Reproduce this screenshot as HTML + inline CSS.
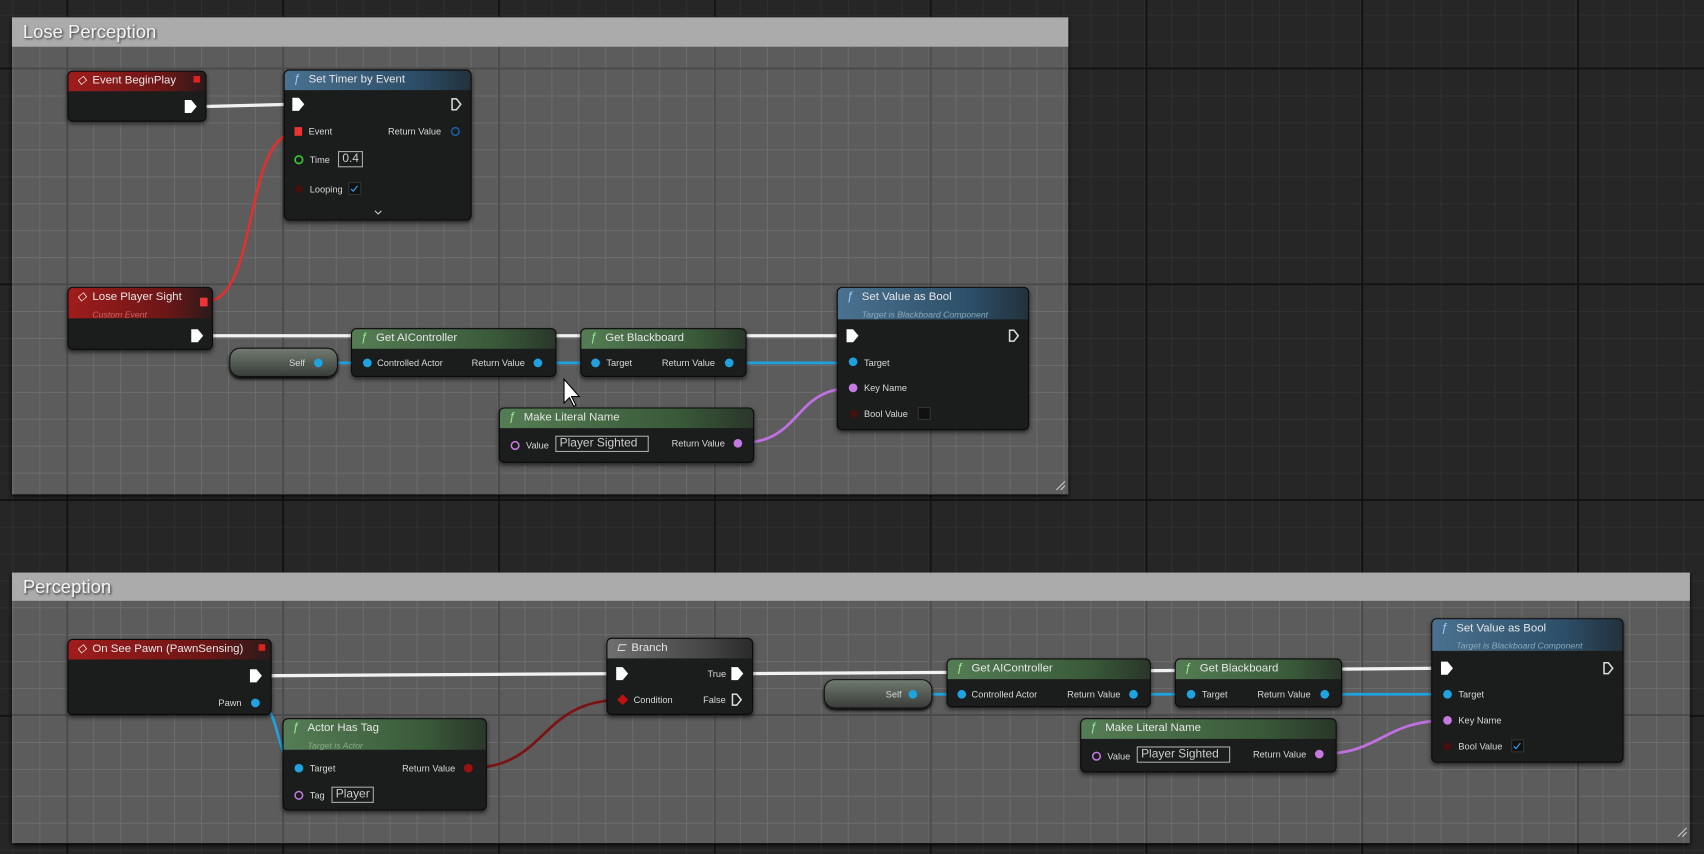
<!DOCTYPE html>
<html><head><meta charset="utf-8"><style>
*{margin:0;padding:0;box-sizing:border-box}
html,body{width:1704px;height:854px;overflow:hidden;background:#262626}
#w{position:absolute;left:0;top:0;width:1568px;height:786px;transform:scale(1.08673,1.08651);transform-origin:0 0;font-family:"Liberation Sans",sans-serif;
background-color:#262626;
background-image:linear-gradient(90deg,#131313 2px,transparent 2px),linear-gradient(0deg,#131313 2px,transparent 2px),linear-gradient(90deg,#303030 1px,transparent 1px),linear-gradient(0deg,#303030 1px,transparent 1px);
background-size:198.6px 198.6px,198.6px 198.6px,24.8px 24.8px,24.8px 24.8px;
background-position:61px 0,0 64px,61px 0,0 64px}
.c{position:absolute;background-color:#5c5c5c;
background-image:linear-gradient(90deg,#4b4b4b 2px,transparent 2px),linear-gradient(0deg,#4b4b4b 2px,transparent 2px),linear-gradient(90deg,#6c6c6c 1px,transparent 1px),linear-gradient(0deg,#6c6c6c 1px,transparent 1px);
background-size:198.6px 198.6px,198.6px 198.6px,24.8px 24.8px,24.8px 24.8px;box-shadow:0 2px 4px #000}
.ct{position:absolute;left:0;right:0;top:0;background:#ababab;color:#f4f4f4;font-size:17px;padding-left:10px;text-shadow:1px 1px 2px #333}
.n{position:absolute;background:#1b1c1c;border:1px solid #0a0a0a;border-radius:5px;box-shadow:0 2px 4px rgba(0,0,0,.6)}
.h{height:18px;border-radius:4px 4px 0 0;color:#e6e6e6;font-size:10.5px;line-height:17px;padding-left:22px;white-space:nowrap;position:relative}
.h i{position:absolute;left:8px;top:0;font-style:italic;color:#9cf;font-size:11px}
.r{background:linear-gradient(90deg,#a01c1c,#6a1616 70%,#2a1a1a)}
.b{background:linear-gradient(90deg,#4a7290,#2c4e68 70%,#23313c)}
.g{background:linear-gradient(90deg,#557d55,#395a39 70%,#2a362a)}
.gr{background:linear-gradient(90deg,#707070,#444 70%,#2a2a2a)}
.sub{font-size:8px;font-style:italic;color:#c66;position:absolute;left:22px;top:16px}
.t{position:absolute;font-size:8.5px;color:#d8d8d8;white-space:nowrap}
.box{position:absolute;border:1px solid #aaa;color:#ccc;font-size:11px;padding:0 3px;line-height:13px;height:15px;background:#1b1c1c}
.pill{position:absolute;border-radius:10px;background:linear-gradient(#6f7a6f,#3a3d3a);border:1px solid #111;box-shadow:0 2px 3px #000}
svg{position:absolute;left:0;top:0}
</style></head><body><div id="w">
<div class="c" style="left:11px;top:16px;width:972px;height:439px;background-position:50px 0,0 48px,50px 0,0 48px"><div class="ct" style="height:27px;line-height:27px">Lose Perception</div></div>
<div class="c" style="left:11px;top:527px;width:1544px;height:249px;background-position:50px 0,0 132px,50px 0,0 132px"><div class="ct" style="height:26px;line-height:27px">Perception</div></div>

<svg width="1568" height="786" fill="none">
<g stroke="#f2f2f2" stroke-width="3">
<path d="M188 98 L270 96"/><path d="M194 309 L780 309"/>
<path d="M236 622 C400 622 450 620 568 620"/><path d="M686 620 C900 620 1100 615 1328 615"/>
</g>
<g stroke="#1fa3e0" stroke-width="2.5">
<path d="M293 334 L340 334"/><path d="M495 334 L550 334"/><path d="M672 334 L786 334"/>
<path d="M840 639 L886 639"/><path d="M1043 639 L1098 639"/><path d="M1219 639 L1334 639"/>
<path d="M236 647 C260 647 252 707 276 707"/>
</g>
<path d="M188 278 C240 278 222 121 275 121" stroke="#e03030" stroke-width="2.5"/>
<path d="M431 707 C505 707 495 644 573 644" stroke="#7a1414" stroke-width="2.5"/>
<g stroke="#c070e0" stroke-width="2.5"><path d="M679 408 C740 408 728 357 786 357"/><path d="M1214 694 C1272 694 1272 663 1333 663"/></g>
</svg>

<div class="n" style="left:62px;top:65px;width:128px;height:47px"><div class="h r"><i style="color:#fff">◇</i>Event BeginPlay</div></div>
<div class="n" style="left:261px;top:64px;width:173px;height:139px"><div class="h b"><i>ƒ</i>Set Timer by Event</div></div>
<div class="n" style="left:62px;top:264px;width:134px;height:58px"><div class="h r" style="height:28px"><i style="color:#fff">◇</i>Lose Player Sight<span class="sub">Custom Event</span></div></div>
<div class="pill" style="left:211px;top:320px;width:100px;height:27px"></div>
<div class="n" style="left:323px;top:302px;width:189px;height:45px"><div class="h g"><i style="color:#9e9">ƒ</i>Get AIController</div></div>
<div class="n" style="left:534px;top:302px;width:153px;height:45px"><div class="h g"><i style="color:#9e9">ƒ</i>Get Blackboard</div></div>
<div class="n" style="left:770px;top:264px;width:177px;height:132px"><div class="h b" style="height:29px"><i>ƒ</i>Set Value as Bool<span class="sub" style="color:#8ab">Target is Blackboard Component</span></div></div>
<div class="n" style="left:459px;top:375px;width:235px;height:51px"><div class="h g"><i style="color:#9e9">ƒ</i>Make Literal Name</div></div>

<div class="n" style="left:62px;top:588px;width:188px;height:70px"><div class="h r"><i style="color:#fff">◇</i>On See Pawn (PawnSensing)</div></div>
<div class="n" style="left:260px;top:661px;width:188px;height:85px"><div class="h g" style="height:28px"><i style="color:#9e9">ƒ</i>Actor Has Tag<span class="sub" style="color:#8a8">Target is Actor</span></div></div>
<div class="n" style="left:558px;top:587px;width:135px;height:71px"><div class="h gr"><i style="color:#ddd">⊏</i>Branch</div></div>
<div class="pill" style="left:758px;top:625px;width:100px;height:27px"></div>
<div class="n" style="left:871px;top:606px;width:188px;height:45px"><div class="h g"><i style="color:#9e9">ƒ</i>Get AIController</div></div>
<div class="n" style="left:1081px;top:606px;width:154px;height:45px"><div class="h g"><i style="color:#9e9">ƒ</i>Get Blackboard</div></div>
<div class="n" style="left:994px;top:661px;width:236px;height:50px"><div class="h g"><i style="color:#9e9">ƒ</i>Make Literal Name</div></div>
<div class="n" style="left:1317px;top:569px;width:177px;height:133px"><div class="h b" style="height:29px"><i>ƒ</i>Set Value as Bool<span class="sub" style="color:#8ab">Target is Blackboard Component</span></div></div>

<svg width="1568" height="786">
<g fill="#fff">
<path d="M170 92h6l5 6-5 6h-6z"/><path d="M269 90h6l5 6-5 6h-6z"/><path d="M176 303h6l5 6-5 6h-6z"/><path d="M779 303h6l5 6-5 6h-6z"/>
<path d="M230 616h6l5 6-5 6h-6z"/><path d="M567 614h6l5 6-5 6h-6z"/><path d="M673 614h6l5 6-5 6h-6z"/><path d="M1326 609h6l5 6-5 6h-6z"/>
</g>
<g fill="none" stroke="#ddd" stroke-width="1.4">
<path d="M416 91h4l4 5-4 5h-4z"/><path d="M929 304h4l4 5-4 5h-4z"/><path d="M674 639h4l4 5-4 5h-4z"/><path d="M1476 610h4l4 5-4 5h-4z"/>
</g>
<rect x="178" y="70" width="6" height="6" fill="#d22"/><rect x="238" y="593" width="6" height="6" fill="#d22"/>
<rect x="184" y="274" width="7" height="8" fill="#e33"/><rect x="271" y="117" width="7" height="8" fill="#e33"/>
<g fill="#1fa3e0">
<circle cx="293" cy="334" r="4"/><circle cx="338" cy="334" r="4"/><circle cx="495" cy="334" r="4"/><circle cx="548" cy="334" r="4"/><circle cx="671" cy="334" r="4"/><circle cx="785" cy="333" r="4"/>
<circle cx="840" cy="639" r="4"/><circle cx="885" cy="639" r="4"/><circle cx="1043" cy="639" r="4"/><circle cx="1096" cy="639" r="4"/><circle cx="1219" cy="639" r="4"/><circle cx="1332" cy="639" r="4"/>
<circle cx="235" cy="647" r="4"/><circle cx="275" cy="707" r="4"/>
</g>
<circle cx="419" cy="121" r="3.5" fill="none" stroke="#1a5aa0" stroke-width="1.5"/>
<circle cx="275" cy="147" r="3.5" fill="none" stroke="#3c3" stroke-width="1.5"/>
<circle cx="275" cy="174" r="3.5" fill="#4a0e0e"/><circle cx="786" cy="381" r="3.5" fill="#4a0e0e"/><circle cx="1332" cy="687" r="3.5" fill="#4a0e0e"/>
<g fill="#c47ae0"><circle cx="679" cy="408" r="4"/><circle cx="785" cy="357" r="4"/><circle cx="1214" cy="694" r="4"/><circle cx="1332" cy="663" r="4"/></g>
<g fill="none" stroke="#c47ae0" stroke-width="1.4"><circle cx="474" cy="410" r="3.5"/><circle cx="1009" cy="696" r="3.5"/><circle cx="275" cy="732" r="3.5"/></g>
<circle cx="431" cy="707" r="4" fill="#a01010"/>
<path d="M568 644l5-5 5 5-5 5z" fill="#c01010"/>
<rect x="845" y="375" width="11" height="11" fill="#111" stroke="#333"/>
<rect x="321" y="168" width="11" height="11" fill="#111" stroke="#333"/><path d="M323 174l2 2 4-5" stroke="#3af" fill="none"/>
<rect x="1391" y="681" width="11" height="11" fill="#111" stroke="#333"/><path d="M1393 687l2 2 4-5" stroke="#3af" fill="none"/>
<path d="M345 194l3 3 3-3" stroke="#ccc" fill="none"/>
<path d="M972 451l8-8M976 451l4-4" stroke="#ccc"/><path d="M1544 770l8-8M1548 770l4-4" stroke="#ccc"/>
<path d="M519 349v22l5-5 4 8 2-1-4-8h7z" fill="#fff" stroke="#000"/>
</svg>

<span class="t" style="left:284px;top:116px">Event</span><span class="t" style="left:357px;top:116px">Return Value</span>
<span class="t" style="left:285px;top:142px">Time</span><span class="box" style="left:311px;top:139px">0.4</span>
<span class="t" style="left:285px;top:169px">Looping</span>
<span class="t" style="left:266px;top:329px">Self</span>
<span class="t" style="left:347px;top:329px">Controlled Actor</span><span class="t" style="left:434px;top:329px">Return Value</span>
<span class="t" style="left:558px;top:329px">Target</span><span class="t" style="left:609px;top:329px">Return Value</span>
<span class="t" style="left:795px;top:329px">Target</span><span class="t" style="left:795px;top:352px">Key Name</span><span class="t" style="left:795px;top:376px">Bool Value</span>
<span class="t" style="left:484px;top:405px">Value</span><span class="box" style="left:511px;top:401px;width:86px">Player Sighted</span><span class="t" style="left:618px;top:403px">Return Value</span>
<span class="t" style="left:201px;top:642px">Pawn</span>
<span class="t" style="left:285px;top:702px">Target</span><span class="t" style="left:370px;top:702px">Return Value</span>
<span class="t" style="left:285px;top:727px">Tag</span><span class="box" style="left:305px;top:724px">Player</span>
<span class="t" style="left:651px;top:615px">True</span><span class="t" style="left:583px;top:639px">Condition</span><span class="t" style="left:647px;top:639px">False</span>
<span class="t" style="left:815px;top:634px">Self</span>
<span class="t" style="left:894px;top:634px">Controlled Actor</span><span class="t" style="left:982px;top:634px">Return Value</span>
<span class="t" style="left:1106px;top:634px">Target</span><span class="t" style="left:1157px;top:634px">Return Value</span>
<span class="t" style="left:1342px;top:634px">Target</span><span class="t" style="left:1342px;top:658px">Key Name</span><span class="t" style="left:1342px;top:682px">Bool Value</span>
<span class="t" style="left:1019px;top:691px">Value</span><span class="box" style="left:1046px;top:687px;width:86px">Player Sighted</span><span class="t" style="left:1153px;top:689px">Return Value</span>
</div></body></html>
